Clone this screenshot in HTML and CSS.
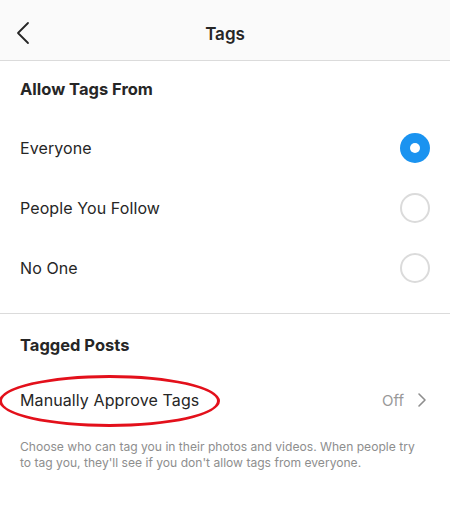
FILE: index.html
```html
<!DOCTYPE html>
<html>
<head>
<meta charset="utf-8">
<link rel="stylesheet" href="styles.css">
</head>
<body>
<div class="page">
  <header class="topbar">
    <svg class="back" width="14" height="24" viewBox="0 0 14 24"><path d="M12 2 L2 12 L12 22" fill="none" stroke="#262626" stroke-width="1.8" stroke-linecap="round" stroke-linejoin="round"/></svg>
    <div class="title">Tags</div>
  </header>

  <section class="group first">
    <h2 class="heading">Allow Tags From</h2>
    <div class="row"><span class="label">Everyone</span><span class="radio on"></span></div>
    <div class="row"><span class="label">People You Follow</span><span class="radio"></span></div>
    <div class="row"><span class="label">No One</span><span class="radio"></span></div>
  </section>

  <section class="group second">
    <h2 class="heading">Tagged Posts</h2>
    <div class="row link">
      <span class="label">Manually Approve Tags</span>
      <span class="value">Off
        <svg class="chev" width="10" height="16" viewBox="0 0 10 16"><path d="M2 2 L8 8 L2 14" fill="none" stroke="#8e8e8e" stroke-width="1.6" stroke-linecap="round" stroke-linejoin="round"/></svg>
      </span>
      <span class="circle-mark"></span>
    </div>
    <p class="note">Choose who can tag you in their photos and videos. When people try to tag you, they'll see if you don't allow tags from everyone.</p>
  </section>
</div>
</body>
</html>
```

FILE: styles.css
```css
* { box-sizing: border-box; }
html, body { margin: 0; padding: 0; background: #fff; }
body { font-family: Inter, "Noto Sans", "Liberation Sans", sans-serif; color: #262626; }
.page { width: 450px; height: 519px; overflow: hidden; }

.topbar {
  height: 61px;
  background: #fafafa;
  border-bottom: 1px solid #dbdbdb;
  display: flex;
  align-items: center;
  justify-content: center;
  position: relative;
}
.back { position: absolute; left: 16px; top: 21px; }
.title { font-size: 17px; font-weight: 600; color: #262626; margin-top: 8px; }

.group { display: flex; flex-direction: column; }
.first { border-bottom: 1px solid #dbdbdb; padding-bottom: 15px; }
.heading { margin: 0; font-size: 16.5px; font-weight: 700; line-height: 22px; padding-left: 20px; color: #262626; }
.first .heading { padding-top: 17px; padding-bottom: 18px; }
.second .heading { padding-top: 20px; padding-bottom: 14px; }

.row {
  height: 60px;
  display: flex;
  align-items: center;
  justify-content: space-between;
  padding: 0 20px;
  position: relative;
}
.label { font-size: 16px; color: #262626; letter-spacing: 0.1px; }
.radio {
  width: 30px; height: 30px;
  border-radius: 50%;
  border: 2px solid #dbdbdb;
  display: flex; align-items: center; justify-content: center;
}
.radio.on { border: none; background: #1a93f0; }
.radio.on::after { content: ""; width: 10px; height: 10px; border-radius: 50%; background: #fff; }

.value { display: flex; align-items: center; gap: 13px; font-size: 15px; color: #999; padding-right: 3px; }
.circle-mark {
  position: absolute;
  left: -1px; top: 5px;
  width: 221px; height: 52px;
  border: 3px solid #e3101b;
  border-radius: 50%;
  pointer-events: none;
}
.note {
  margin: 0;
  padding: 9px 30px 0 20px;
  font-size: 12.1px;
  line-height: 16px;
  color: #8e8e8e;
}
```
